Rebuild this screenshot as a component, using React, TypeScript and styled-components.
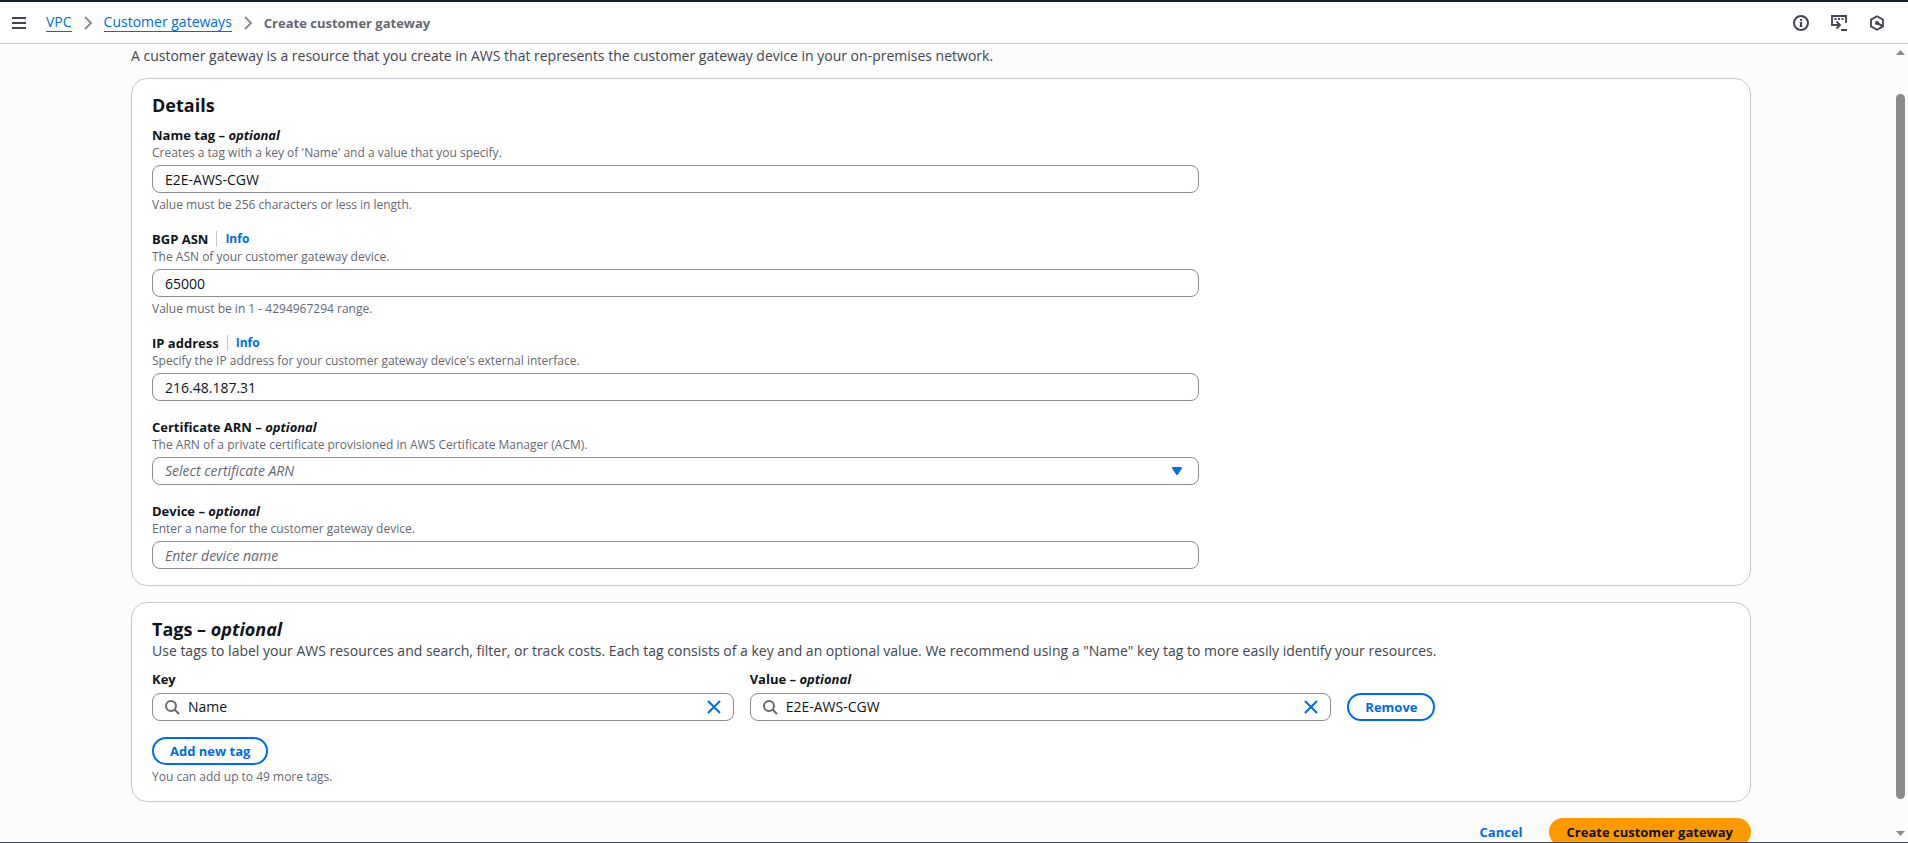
import React, { useState } from 'react';
import styled, { createGlobalStyle, css } from 'styled-components';

const color = {
  text: '#0f141a',
  body: '#424650',
  muted: '#656871',
  link: '#006ce0',
  inputBorder: '#8c8c94',
  divider: '#c6c6cd',
  page: '#fcfcfd',
  primary: '#ff9900',
  dark: '#161d26',
  thumb: '#8b8b8b',
};

const GlobalStyle = createGlobalStyle`
  *, *::before, *::after { box-sizing: border-box; }
  body {
    margin: 0;
    background: ${color.page};
    color: ${color.text};
    font-family: 'Open Sans', 'Noto Sans', sans-serif;
    font-size: 14px;
    line-height: 20px;
  }
  h2, p { margin: 0; }
  button, input, select { font: inherit; color: inherit; }
`;

const strongText = css`
  font-size: 13px;
  line-height: 20px;
  font-weight: 700;
`;

const Shell = styled.div`
  display: flex;
  flex-direction: column;
  height: 100vh;
  overflow: hidden;
  border-top: 2px solid ${color.dark};
  border-bottom: 1px solid ${color.body};
`;

const TopBar = styled.header`
  display: flex;
  flex: none;
  align-items: center;
  justify-content: space-between;
  height: 42px;
  padding: 0 23px 0 12px;
  background: #fff;
  border-bottom: 1px solid ${color.divider};
`;

const BarGroup = styled.div<{ $gap: number }>`
  display: flex;
  align-items: center;
  gap: ${({ $gap }) => $gap}px;
`;

const IconButton = styled.button<{ $tone?: string }>`
  display: flex;
  padding: 0;
  border: 0;
  background: none;
  color: ${({ $tone }) => $tone ?? color.body};
  cursor: pointer;
`;

const Crumbs = styled.ol`
  display: flex;
  align-items: center;
  margin: 0;
  padding: 0;
  list-style: none;
`;

const Crumb = styled.li`
  display: flex;
  align-items: center;

  svg {
    margin: 0 8px;
    color: ${color.inputBorder};
  }
`;

const CrumbLink = styled.a`
  color: ${color.link};
  line-height: 18px;
  text-decoration: none;
  border-bottom: 1px solid currentColor;
`;

const CrumbCurrent = styled.span`
  ${strongText}
  color: ${color.muted};
`;

const Body = styled.div`
  display: flex;
  flex: 1;
  min-height: 0;
`;

const Main = styled.main`
  flex: 1;
  min-width: 0;
  overflow: hidden;
  padding: 2px 11px 0 0;
`;

const Content = styled.form`
  display: flex;
  flex-direction: column;
  width: 90%;
  max-width: 1620px;
  margin: 0 auto;
`;

const Lead = styled.p`
  color: ${color.body};
`;

const Card = styled.section`
  margin-top: 12px;
  padding: 14px 20px 16px;
  background: #fff;
  border: 1px solid ${color.divider};
  border-radius: 16px;

  & + & {
    margin-top: 16px;
  }
`;

const Heading = styled.h2`
  font-size: 18px;
  line-height: 24px;
  font-weight: 700;
`;

const FieldGrid = styled.div`
  display: grid;
  grid-template-columns: repeat(3, 1fr);
  gap: 16px;
  padding-top: 8px;
`;

const FieldBox = styled.div`
  grid-column: span 2;
`;

const LabelRow = styled.div`
  display: flex;
  align-items: center;
`;

const Label = styled.label`
  ${strongText}
  display: block;
`;

const InfoLink = styled.a`
  margin-left: 8px;
  padding-left: 8px;
  border-left: 1px solid ${color.divider};
  color: ${color.link};
  font-size: 12px;
  line-height: 16px;
  font-weight: 700;
  text-decoration: none;
`;

const Note = styled.p<{ $spaced?: boolean }>`
  margin-top: ${({ $spaced }) => ($spaced ? 4 : 0)}px;
  color: ${color.muted};
  font-size: 12px;
  line-height: 16px;
`;

const controlStyle = css`
  display: block;
  width: 100%;
  height: 28px;
  padding: 0 12px;
  background: #fff;
  border: 1px solid ${color.inputBorder};
  border-radius: 8px;
  outline: none;

  &:focus {
    border-color: ${color.link};
  }
`;

const ControlSlot = styled.div`
  margin-top: 4px;
`;

const TextInput = styled.input`
  ${controlStyle}

  &::placeholder {
    color: ${color.muted};
    font-style: italic;
    opacity: 1;
  }
`;

const SelectWrap = styled.div`
  display: grid;
  align-items: center;

  > * {
    grid-area: 1 / 1;
  }

  svg {
    justify-self: end;
    margin-right: 14px;
    color: ${color.link};
    pointer-events: none;
  }
`;

const Select = styled.select`
  ${controlStyle}
  appearance: none;
  color: ${color.muted};
  font-style: italic;
`;

const TagGrid = styled.div`
  display: grid;
  grid-template-columns: 38fr 38fr 25fr;
  column-gap: 16px;
  align-items: end;
  padding-top: 8px;
`;

const SearchBox = styled.div`
  display: flex;
  align-items: center;
  gap: 8px;
  height: 28px;
  margin-top: 4px;
  padding: 0 11px;
  background: #fff;
  border: 1px solid ${color.inputBorder};
  border-radius: 8px;
  color: ${color.muted};
`;

const SearchInput = styled.input`
  flex: 1;
  min-width: 0;
  padding: 0;
  border: 0;
  outline: none;
  background: none;
  color: ${color.text};
`;

const Button = styled.button<{ $variant?: 'normal' | 'primary' | 'link' }>`
  ${strongText}
  height: 28px;
  padding: 0 16px;
  border: 2px solid ${color.link};
  border-radius: 20px;
  background: #fff;
  color: ${color.link};
  cursor: pointer;

  ${({ $variant }) =>
    $variant === 'primary' &&
    css`
      border-color: ${color.primary};
      background: ${color.primary};
      color: ${color.text};
    `}
  ${({ $variant }) =>
    $variant === 'link' &&
    css`
      border-color: transparent;
      background: transparent;
    `}
`;

const TagAction = styled.div`
  display: flex;
`;

const AddTag = styled.div`
  display: flex;
  flex-direction: column;
  align-items: flex-start;
  padding-top: 16px;
`;

const Actions = styled.div`
  display: flex;
  justify-content: flex-end;
  gap: 8px;
  padding-top: 16px;
`;

const ScrollRail = styled.div`
  display: flex;
  flex: none;
  flex-direction: column;
  align-items: center;
  width: 15px;
  padding: 6px 0;
  color: ${color.thumb};
`;

const Thumb = styled.div`
  flex: 1;
  width: 9px;
  margin: 39px 0 32px;
  border-radius: 5px;
  background: currentColor;
`;

const Svg = ({ size = 16, children }: { size?: number; children: React.ReactNode }) => (
  <svg
    width={size}
    height={size}
    viewBox="0 0 16 16"
    fill="none"
    stroke="currentColor"
    strokeWidth="2"
    aria-hidden="true"
  >
    {children}
  </svg>
);

const MenuIcon = () => (
  <svg width="14" height="12" viewBox="0 0 14 12" stroke="currentColor" strokeWidth="2" aria-hidden="true">
    <path d="M0 1h14M0 6h14M0 11h14" />
  </svg>
);
const ChevronIcon = () => (
  <Svg>
    <path d="m5 2 6 6-6 6" />
  </Svg>
);
const InfoIcon = () => (
  <Svg>
    <circle cx="8" cy="8" r="7" />
    <path d="M8 12V7M8 6V4" />
    <path d="M6.500 7.500H8M6.500 11.500h3" strokeWidth="1" />
  </Svg>
);
const ShellIcon = () => (
  <Svg>
    <path d="M15 8V1H1v9h7M5.500 6.500 9 10l-3.500 3.500M10 15h6" strokeWidth="1.800" />
    <path d="M3.500 4h2M7 4h2M10.500 4h2" />
  </Svg>
);
const HexIcon = () => (
  <Svg>
    <path d="M8 1.200 14 4.600v6.800L8 14.800 2 11.400V4.600z" strokeWidth="1.800" />
    <circle cx="8" cy="8" r="2" fill="currentColor" stroke="none" />
    <path d="m8 8 5.500 3" />
  </Svg>
);
const SearchIcon = () => (
  <Svg>
    <circle cx="7" cy="7" r="5" />
    <path d="m15 15-4.500-4.500" />
  </Svg>
);
const CloseIcon = () => (
  <Svg>
    <path d="m2 2 12 12M14 2 2 14" />
  </Svg>
);
const CaretIcon = () => (
  <Svg>
    <path d="M4 5h8l-4 6z" fill="currentColor" strokeLinejoin="round" />
  </Svg>
);
const RailArrow = ({ down }: { down?: boolean }) => (
  <svg width="9" height="5" viewBox="0 0 9 5" fill="currentColor" aria-hidden="true">
    <path d={down ? 'M0 0h9L4.500 5z' : 'M0 5h9L4.500 0z'} />
  </svg>
);

const Optional = () => (
  <>
    {' '}– <i>optional</i>
  </>
);

type FieldProps = {
  id: string;
  label: string;
  optional?: boolean;
  info?: boolean;
  description: string;
  hint?: string;
  children: React.ReactNode;
};

const Field = ({ id, label, optional, info, description, hint, children }: FieldProps) => (
  <FieldBox>
    <LabelRow>
      <Label htmlFor={id}>
        {label}
        {optional && <Optional />}
      </Label>
      {info && <InfoLink href="#info">Info</InfoLink>}
    </LabelRow>
    <Note>{description}</Note>
    <ControlSlot>{children}</ControlSlot>
    {hint && <Note $spaced>{hint}</Note>}
  </FieldBox>
);

const TagField = ({ id, label, optional, initial }: { id: string; label: string; optional?: boolean; initial: string }) => {
  const [value, setValue] = useState(initial);
  return (
    <div>
      <Label htmlFor={id}>
        {label}
        {optional && <Optional />}
      </Label>
      <SearchBox>
        <SearchIcon />
        <SearchInput id={id} value={value} onChange={(e) => setValue(e.target.value)} />
        <IconButton type="button" $tone={color.link} aria-label={`Clear ${label}`} onClick={() => setValue('')}>
          <CloseIcon />
        </IconButton>
      </SearchBox>
    </div>
  );
};

export default function App() {
  return (
    <>
      <GlobalStyle />
      <Shell>
        <TopBar>
          <BarGroup $gap={20}>
            <IconButton aria-label="Open navigation">
              <MenuIcon />
            </IconButton>
            <nav aria-label="Breadcrumbs">
              <Crumbs>
                <Crumb>
                  <CrumbLink href="#vpc">VPC</CrumbLink>
                  <ChevronIcon />
                </Crumb>
                <Crumb>
                  <CrumbLink href="#customer-gateways">Customer gateways</CrumbLink>
                  <ChevronIcon />
                </Crumb>
                <Crumb>
                  <CrumbCurrent aria-current="page">Create customer gateway</CrumbCurrent>
                </Crumb>
              </Crumbs>
            </nav>
          </BarGroup>
          <BarGroup $gap={22}>
            <IconButton aria-label="Information">
              <InfoIcon />
            </IconButton>
            <IconButton aria-label="CloudShell">
              <ShellIcon />
            </IconButton>
            <IconButton aria-label="Assistant">
              <HexIcon />
            </IconButton>
          </BarGroup>
        </TopBar>
        <Body>
          <Main>
            <Content onSubmit={(e) => e.preventDefault()}>
              <Lead>
                A customer gateway is a resource that you create in AWS that represents the customer gateway device in
                your on-premises network.
              </Lead>
              <Card>
                <Heading>Details</Heading>
                <FieldGrid>
                  <Field
                    id="name"
                    label="Name tag"
                    optional
                    description="Creates a tag with a key of 'Name' and a value that you specify."
                    hint="Value must be 256 characters or less in length."
                  >
                    <TextInput id="name" defaultValue="E2E-AWS-CGW" />
                  </Field>
                  <Field
                    id="asn"
                    label="BGP ASN"
                    info
                    description="The ASN of your customer gateway device."
                    hint="Value must be in 1 - 4294967294 range."
                  >
                    <TextInput id="asn" defaultValue="65000" />
                  </Field>
                  <Field
                    id="ip"
                    label="IP address"
                    info
                    description="Specify the IP address for your customer gateway device's external interface."
                  >
                    <TextInput id="ip" defaultValue="216.48.187.31" />
                  </Field>
                  <Field
                    id="arn"
                    label="Certificate ARN"
                    optional
                    description="The ARN of a private certificate provisioned in AWS Certificate Manager (ACM)."
                  >
                    <SelectWrap>
                      <Select id="arn" defaultValue="">
                        <option value="">Select certificate ARN</option>
                      </Select>
                      <CaretIcon />
                    </SelectWrap>
                  </Field>
                  <Field
                    id="device"
                    label="Device"
                    optional
                    description="Enter a name for the customer gateway device."
                  >
                    <TextInput id="device" placeholder="Enter device name" />
                  </Field>
                </FieldGrid>
              </Card>
              <Card>
                <Heading>
                  Tags
                  <Optional />
                </Heading>
                <Lead>
                  Use tags to label your AWS resources and search, filter, or track costs. Each tag consists of a key
                  and an optional value. We recommend using a "Name" key tag to more easily identify your resources.
                </Lead>
                <TagGrid>
                  <TagField id="tag-key" label="Key" initial="Name" />
                  <TagField id="tag-value" label="Value" optional initial="E2E-AWS-CGW" />
                  <TagAction>
                    <Button type="button">Remove</Button>
                  </TagAction>
                </TagGrid>
                <AddTag>
                  <Button type="button">Add new tag</Button>
                  <Note $spaced>You can add up to 49 more tags.</Note>
                </AddTag>
              </Card>
              <Actions>
                <Button type="button" $variant="link">
                  Cancel
                </Button>
                <Button type="submit" $variant="primary">
                  Create customer gateway
                </Button>
              </Actions>
            </Content>
          </Main>
          <ScrollRail aria-hidden="true">
            <RailArrow />
            <Thumb />
            <RailArrow down />
          </ScrollRail>
        </Body>
      </Shell>
    </>
  );
}
